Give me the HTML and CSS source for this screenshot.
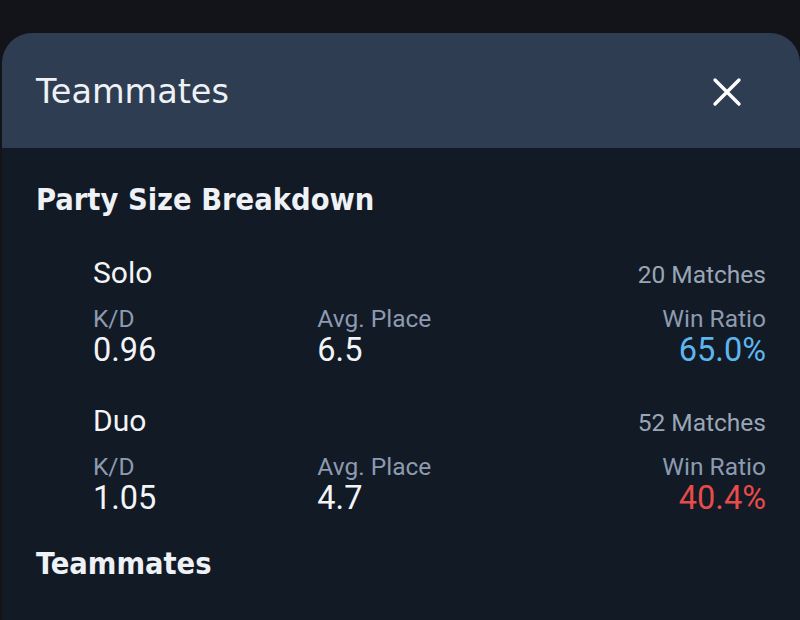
FILE: index.html
```html
<!DOCTYPE html>
<html lang="en">
<head>
    <meta charset="UTF-8">
    <meta name="viewport" content="width=device-width, initial-scale=1.0">
    <title>Teammates</title>
    <link rel="stylesheet" href="styles.css">
</head>
<body>
    <!-- Panel de compañeros -->
    <div class="modal">
        <div class="modal-header">
            <h1 class="modal-title">Teammates</h1>
            <button class="close-btn" aria-label="Close">
                <svg width="30" height="30" viewBox="0 0 30 30">
                    <path d="M3 3 L27 27 M27 3 L3 27" stroke="#fff" stroke-width="3.4" stroke-linecap="round" fill="none"/>
                </svg>
            </button>
        </div>

        <div class="modal-body">
            <h2 class="section-title">Party Size Breakdown</h2>

            <div class="party">
                <div class="party-top">
                    <span class="party-name">Solo</span>
                    <span class="party-matches">20 Matches</span>
                </div>
                <div class="party-stats">
                    <div class="stat">
                        <span class="stat-label">K/D</span>
                        <span class="stat-value">0.96</span>
                    </div>
                    <div class="stat">
                        <span class="stat-label">Avg. Place</span>
                        <span class="stat-value">6.5</span>
                    </div>
                    <div class="stat stat-right">
                        <span class="stat-label">Win Ratio</span>
                        <span class="stat-value good">65.0%</span>
                    </div>
                </div>
            </div>

            <div class="party">
                <div class="party-top">
                    <span class="party-name">Duo</span>
                    <span class="party-matches">52 Matches</span>
                </div>
                <div class="party-stats">
                    <div class="stat">
                        <span class="stat-label">K/D</span>
                        <span class="stat-value">1.05</span>
                    </div>
                    <div class="stat">
                        <span class="stat-label">Avg. Place</span>
                        <span class="stat-value">4.7</span>
                    </div>
                    <div class="stat stat-right">
                        <span class="stat-label">Win Ratio</span>
                        <span class="stat-value bad">40.4%</span>
                    </div>
                </div>
            </div>

            <h2 class="section-title section-gap">Teammates</h2>
        </div>
    </div>
</body>
</html>
```

FILE: styles.css
```css
body{
    margin: 0;
    background-color: #121419;
    font-family: Roboto, "Liberation Sans", sans-serif;
    color: #f2f4f7;
    overflow: hidden;
}

.modal{
    margin: 33px 0 0 2px;
    height: 587px;
    border-radius: 30px 30px 0 0;
    background-color: #111a25;
    overflow: hidden;
}

.modal-header{
    box-sizing: border-box;
    height: 115px;
    background-color: #2e3d51;
    display: flex;
    align-items: center;
    justify-content: space-between;
    padding: 2px 58px 0 34px;
}

.modal-title{
    margin: 0;
    font-family: "DejaVu Sans", sans-serif;
    font-weight: normal;
    font-size: 33.5px;
    color: #eef1f5;
}

.close-btn{
    background: none;
    border: 0;
    padding: 0;
    width: 30px;
    height: 30px;
    display: flex;
}

.modal-body{
    padding: 34px 34px 0 34px;
}

.section-title{
    margin: 0;
    font-family: "DejaVu Sans", sans-serif;
    font-stretch: condensed;
    font-weight: bold;
    font-size: 30.5px;
    line-height: 36px;
    color: #eef1f5;
}

.section-gap{
    margin-top: 29px;
}

.party{
    padding: 37px 0 0 57px;
}

.party:nth-of-type(n+2){
    padding-top: 34px;
}

.party-top{
    display: flex;
    justify-content: space-between;
    align-items: baseline;
}

.party-name{
    font-size: 30px;
    line-height: 36px;
}

.party-matches{
    font-size: 24.5px;
    color: #9aa5b6;
}

.party-stats{
    display: grid;
    grid-template-columns: 1fr 1fr 1fr;
    margin-top: 16px;
}

.stat{
    display: flex;
    flex-direction: column;
}

.stat-right{
    align-items: flex-end;
}

.stat-label{
    font-size: 24.5px;
    line-height: 24px;
    color: #8d9ab0;
}

.stat-value{
    font-size: 32.5px;
    line-height: 38px;
}

.good{
    color: #5eb6ef;
}

.bad{
    color: #e94b4b;
}
```
